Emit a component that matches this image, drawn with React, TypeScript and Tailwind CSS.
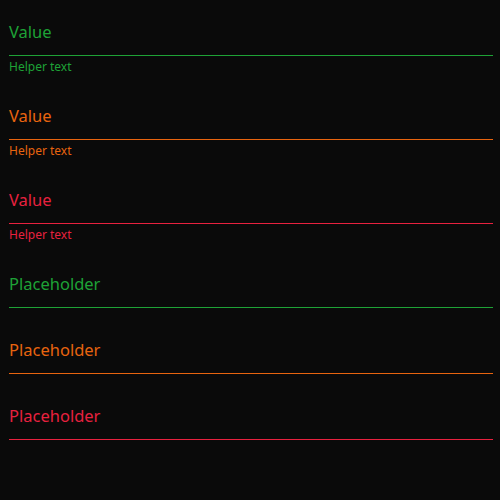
import React from "react";

type Field = { text: string; color: string; helper?: boolean };

const fields: Field[] = [
  { text: "Value", color: "text-[#1ea236] border-[#1ea236]", helper: true },
  { text: "Value", color: "text-[#e8640f] border-[#e8640f]", helper: true },
  { text: "Value", color: "text-[#e8213f] border-[#e8213f]", helper: true },
  { text: "Placeholder", color: "text-[#1ea236] border-[#1ea236]" },
  { text: "Placeholder", color: "text-[#e8640f] border-[#e8640f]" },
  { text: "Placeholder", color: "text-[#e8213f] border-[#e8213f]" },
];

export default function App() {
  return (
    <div className="w-[500px] h-[500px] bg-[#0a0a0a] pl-[9px] pr-[7px] font-['Noto_Sans',sans-serif]">
      {fields.map((f, i) => (
        <div key={i} className={`mb-[10px] ${f.color}`}>
          <div className="h-[56px] border-b flex items-end pb-[13px]">
            <span className="text-[16.5px] leading-[20px]">{f.text}</span>
          </div>
          {f.helper && (
            <div className="h-[18px] text-[12px] leading-[18px] pt-[2px]">Helper text</div>
          )}
        </div>
      ))}
    </div>
  );
}
